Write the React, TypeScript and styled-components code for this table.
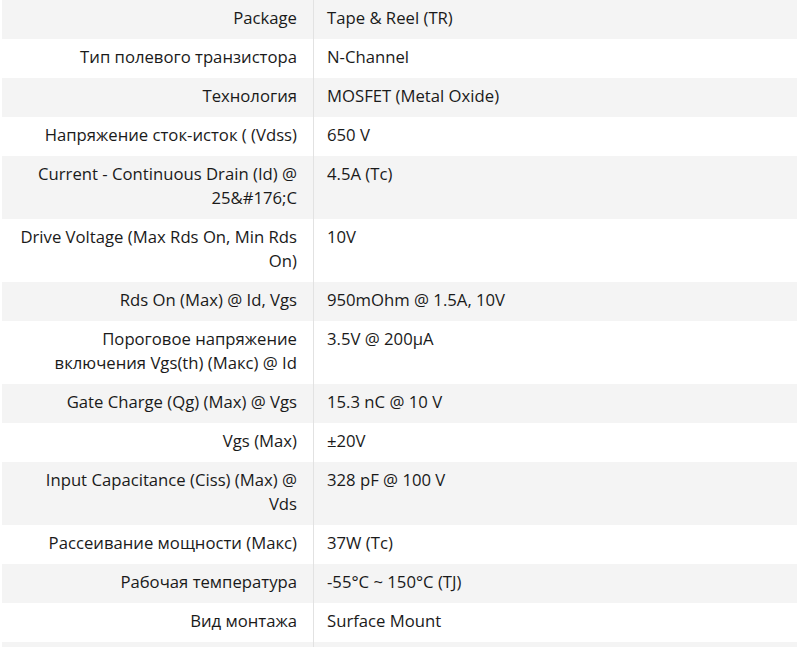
import React from "react";
import styled, { createGlobalStyle } from "styled-components";

const Global = createGlobalStyle`
  html, body { margin: 0; padding: 0; background: #ffffff; }
  body { font-family: "Open Sans", "Noto Sans", sans-serif; color: #1a1a1a; }
`;

const Wrap = styled.div`
  padding-left: 2px;
`;

const Table = styled.table`
  width: 795px;
  border-collapse: collapse;
  table-layout: fixed;
  font-size: 16.7px;
  line-height: 24px;
`;

const Row = styled.tr`
  &:nth-child(odd) { background: #f4f4f4; }
`;

const Label = styled.td`
  width: 279px;
  padding: 6px 16px 9px 16px;
  text-align: right;
  vertical-align: top;
  border-right: 1px solid #e2e2e2;
`;

const Value = styled.td`
  padding: 6px 13px 9px 13px;
  text-align: left;
  vertical-align: top;
`;

const rows: [string, string][] = [
  ["Package", "Tape & Reel (TR)"],
  ["Тип полевого транзистора", "N-Channel"],
  ["Технология", "MOSFET (Metal Oxide)"],
  ["Напряжение сток-исток ( (Vdss)", "650 V"],
  ["Current - Continuous Drain (Id) @ 25&#176;C", "4.5A (Tc)"],
  ["Drive Voltage (Max Rds On, Min Rds On)", "10V"],
  ["Rds On (Max) @ Id, Vgs", "950mOhm @ 1.5A, 10V"],
  ["Пороговое напряжение включения Vgs(th) (Макс) @ Id", "3.5V @ 200µA"],
  ["Gate Charge (Qg) (Max) @ Vgs", "15.3 nC @ 10 V"],
  ["Vgs (Max)", "±20V"],
  ["Input Capacitance (Ciss) (Max) @ Vds", "328 pF @ 100 V"],
  ["Рассеивание мощности (Макс)", "37W (Tc)"],
  ["Рабочая температура", "-55°C ~ 150°C (TJ)"],
  ["Вид монтажа", "Surface Mount"],
  ["", ""],
];

export default function App() {
  return (
    <>
      <Global />
      <Wrap>
        <Table>
          <tbody>
            {rows.map(([k, v], i) => (
              <Row key={i}>
                <Label>{k || "\u00a0"}</Label>
                <Value>{v || "\u00a0"}</Value>
              </Row>
            ))}
          </tbody>
        </Table>
      </Wrap>
    </>
  );
}
